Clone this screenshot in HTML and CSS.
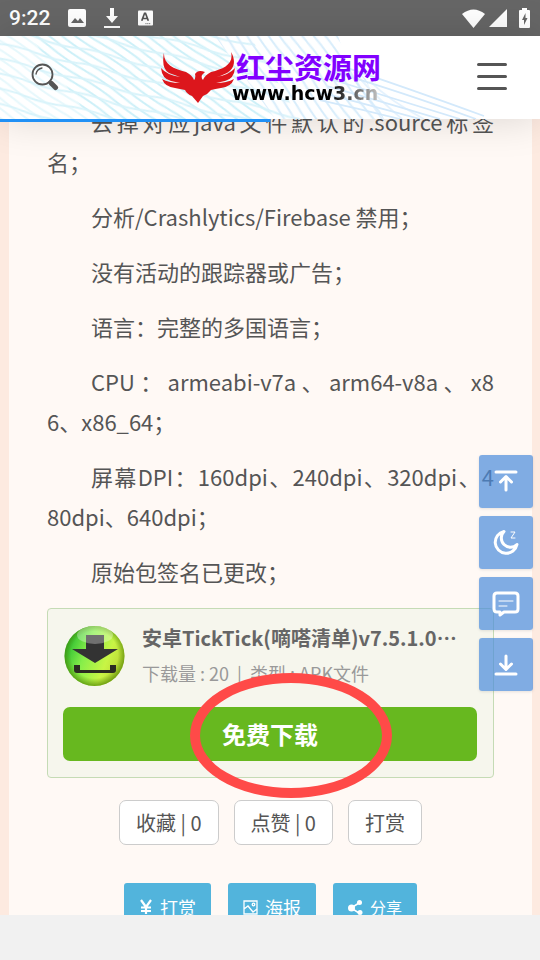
FILE: index.html
```html
<!DOCTYPE html>
<html lang="zh-CN">
<head>
    <meta charset="UTF-8">
    <meta name="viewport" content="width=device-width, initial-scale=1.0">
    <title>红尘资源网</title>
    <link rel="stylesheet" href="styles.css">
</head>
<body>

    <div class="status-bar">
        <span class="clock">9:22</span>
        <svg width="18" height="18" viewBox="0 0 18 18"><rect width="18" height="18" rx="2" fill="#fff"/><path d="M3 14l4-5 3 3 2-3 4 5z" fill="#666"/></svg>
        <svg width="16" height="20" viewBox="0 0 16 20" fill="#fff"><path d="M6 0h4v8h4l-6 7-6-7h4zM0 18h16v2H0z"/></svg>
        <svg width="15" height="16" viewBox="0 0 16 16"><rect width="16" height="16" rx="1" fill="#fff"/><path d="M4 11l3-8h1l3 8M5 8.500h5" fill="none" stroke="#555" stroke-width="1.800"/><path d="M8 14h6" stroke="#555" stroke-dasharray="1 1"/></svg>
        <div class="status-right">
            <svg width="23" height="19" viewBox="0 0 23 19" fill="#fff"><path d="M0 5Q11.500-4 23 5L11.500 19z"/></svg>
            <svg width="18" height="18" viewBox="0 0 18 18" fill="#fff"><path d="M18 0v18H0z"/></svg>
            <svg class="battery" width="11" height="20" viewBox="0 0 11 20"><path d="M3 0h5v2h2q1 0 1 1v16q0 1-1 1H1q-1 0-1-1V3q0-1 1-1h2z" fill="#fff"/><path d="M6.500 5L3 12h2v5l3.500-7H6.500z" fill="#666"/></svg>
        </div>
    </div>

    <header class="nav-bar">
        <svg class="nav-waves" viewBox="0 0 540 84" preserveAspectRatio="none" aria-hidden="true">
            <defs>
                <pattern id="wave-a" width="90" height="8" patternUnits="userSpaceOnUse" patternTransform="rotate(35)">
                    <path d="M0 4Q22 2 45 4T90 4" fill="none" stroke="#cdf0f8" stroke-width="1.800"/>
                </pattern>
                <pattern id="wave-b" width="80" height="15" patternUnits="userSpaceOnUse" patternTransform="rotate(14)">
                    <path d="M0 8Q20 5 40 8T80 8" fill="none" stroke="#d8f3fa" stroke-width="1.800"/>
                </pattern>
                <pattern id="wave-c" width="90" height="9" patternUnits="userSpaceOnUse" patternTransform="rotate(55)">
                    <path d="M0 4Q22 2 45 4T90 4" fill="none" stroke="#d8edfb" stroke-width="1.800"/>
                </pattern>
            </defs>
            <path d="M30 0H215L275 84H90z" fill="url(#wave-a)"/>
            <path d="M0 0H30L90 84H0z" fill="url(#wave-a)" opacity="0.500"/>
            <path d="M0 0H250L300 84H0z" fill="url(#wave-b)"/>
            <path d="M215 0H338Q346 26 366 44L384 84H275z" fill="url(#wave-c)"/>
            <g fill="none" stroke="#d3e9fb" stroke-width="1.800">
                <path d="M340 30Q400 50 484 81M336 37Q400 56 476 84M332 44Q390 62 460 84M328 51Q380 66 440 84M324 58Q370 70 420 84M320 65Q360 74 400 84"/>
                <path d="M344 26Q356 46 382 84M354 36Q370 56 402 84M370 46Q390 66 424 84" opacity="0.600"/>
            </g>
        </svg>
        <button class="icon-btn" aria-label="搜索">
            <svg width="28" height="28" viewBox="0 0 28 28" fill="none" stroke="#555" stroke-linecap="round"><circle cx="11.500" cy="11.500" r="10" stroke-width="1.800"/><path d="M5 11q1-5 6-6" stroke-width="1.300"/><path d="M18.500 18.500l2 2" stroke-width="2"/><path d="M20.500 20.500l4 4" stroke-width="5"/></svg>
        </button>
        <a href="#" class="nav-logo">
            <svg width="74" height="52" viewBox="0 0 74 52" fill="#dc161c"><path d="M3 0C2 12 12 17 25 20Q31 23 33 28Q35 26 34 22Q37 17 44 20L41 23Q40 26 42 28Q44 23 50 20C63 17 73 12 70 0C76 10 72 18 66 21Q60 24 55 25Q68 23 74 16Q73 27 64 29L55 31Q66 31 73 27Q70 35 60 36Q54 37 50 38Q47 42 42 44L37 51L31 44Q26 42 24 38Q19 37 14 36Q4 35 1 27Q8 31 19 31L10 29Q1 27 0 16Q6 23 19 25L8 21Q0 17 3 0z"/></svg>
            <span class="logo-text">
                <span class="logo-name">红尘资源网</span>
                <span class="logo-url">www.hcw3.cn</span>
            </span>
        </a>
        <button class="icon-btn" aria-label="菜单">
            <svg width="30" height="28" viewBox="0 0 30 28" stroke="#555" stroke-width="3" stroke-linecap="round"><path d="M1.500 1.500h27M1.500 13.500h27M1.500 25.500h27"/></svg>
        </button>
        <div class="progress"></div>
    </header>

    <main class="content">
        <article class="article">
            <p><span class="line">去掉对应java文件默认的.source标签</span><span class="line">名；</span></p>
            <p>分析/Crashlytics/Firebase 禁用；</p>
            <p>没有活动的跟踪器或广告；</p>
            <p>语言：完整的多国语言；</p>
            <p>CPU：armeabi-v7a、arm64-v8a、x86、x86_64；</p>
            <p><span class="line">屏幕DPI：160dpi、240dpi、320dpi、4</span><span class="line">80dpi、640dpi；</span></p>
            <p>原始包签名已更改；</p>

            <section class="download-card">
                <div class="download-info">
                    <svg class="download-icon" width="62" height="62" viewBox="0 0 62 62">
                        <defs>
                            <linearGradient id="orb" x1="0" y1="0.300" x2="1" y2="0.700">
                                <stop offset="0" stop-color="#22b82e"/>
                                <stop offset="0.350" stop-color="#86ee4a"/>
                                <stop offset="0.700" stop-color="#c8f545"/>
                                <stop offset="1" stop-color="#b8d030"/>
                            </linearGradient>
                            <radialGradient id="orb-edge" cx="0.500" cy="0.480" r="0.520">
                                <stop offset="0.750" stop-color="#4a8000" stop-opacity="0"/>
                                <stop offset="1" stop-color="#4a8000" stop-opacity="0.700"/>
                            </radialGradient>
                        </defs>
                        <circle cx="31.500" cy="31" r="30" fill="url(#orb)"/>
                        <circle cx="31.500" cy="31" r="30" fill="url(#orb-edge)"/>
                        <path d="M23 10h18v14h14L32 38 9 24h14z" fill="#333"/>
                        <path d="M11 40h6v5h30v-5h6v5q0 3-3 3H14q-3 0-3-3z" fill="#2b2b22"/>
                        <ellipse cx="32" cy="10" rx="18" ry="9" fill="#fff" opacity="0.300"/>
                    </svg>
                    <div class="download-text">
                        <h2>安卓TickTick(嘀嗒清单)v7.5.1.0 高级版</h2>
                        <div class="download-meta">下载量 : 20&nbsp; |&nbsp; 类型 : APK文件</div>
                    </div>
                </div>
                <button class="download-btn">免费下载</button>
                <div class="highlight-ring"></div>
            </section>

            <div class="action-row">
                <button class="action-btn">收藏 | 0</button>
                <button class="action-btn">点赞 | 0</button>
                <button class="action-btn">打赏</button>
            </div>

            <div class="share-row">
                <button class="share-btn"><svg width="14" height="16" viewBox="0 0 14 16" fill="none" stroke="#fff" stroke-width="2.200"><path d="M2 1l5 7 5-7M7 7v8M2 8.500h10M2 12h10"/></svg>打赏</button>
                <button class="share-btn"><svg width="15" height="15" viewBox="0 0 15 15" fill="none" stroke="#fff" stroke-width="1.300"><path d="M1 1h13v13H1zM1 9l4-3 5 6 4-3"/><circle cx="10.500" cy="4.500" r="1.300"/></svg>海报</button>
                <button class="share-btn share-btn-small"><svg width="15" height="15" viewBox="0 0 15 15" fill="#fff"><path d="M11 3L3 8l8 5" fill="none" stroke="#fff" stroke-width="1.500"/><circle cx="3.500" cy="8" r="3.500"/><circle cx="11.500" cy="2.500" r="2.500"/><circle cx="12" cy="12.500" r="2.500"/></svg>分享</button>
            </div>
        </article>
    </main>

    <aside class="side-tools">
        <button aria-label="返回顶部"><svg width="28" height="28" viewBox="0 0 28 28"><path d="M4 4h20M14 22V9M8.500 14L14 8.500l5.500 5.500"/></svg></button>
        <button aria-label="夜间模式"><svg width="28" height="28" viewBox="0 0 28 28"><path d="M12 2.500a11 11 0 1 0 13 13A9 9 0 0 1 12 2.500z"/><path class="thin" d="M19 3h4l-4 6h4"/></svg></button>
        <button aria-label="评论"><svg width="28" height="28" viewBox="0 0 28 28"><path d="M5 3h18q3 0 3 3v13q0 3-3 3H12l-4 3v-3H5q-3 0-3-3V6q0-3 3-3z"/><path class="thin" d="M7 11h14M7 16h8"/></svg></button>
        <button aria-label="前往底部"><svg width="28" height="28" viewBox="0 0 28 28"><path d="M4 23h20M14 5v13M8.500 13l5.500 5.500 5.500-5.500"/></svg></button>
    </aside>

    <footer class="system-nav"></footer>

</body>
</html>
```
FILE: styles.css
```css
* {
    margin: 0;
    padding: 0;
    box-sizing: border-box;
}

body {
    font-family: "Noto Sans CJK SC", sans-serif;
    color: #555;
    background: #fdeae0;
    height: 100vh;
    display: flex;
    flex-direction: column;
    position: relative;
    overflow: hidden;
}

button {
    font-family: inherit;
    border: none;
    cursor: pointer;
}

.status-bar {
    flex: none;
    height: 36px;
    padding: 0 10px 0 9px;
    display: flex;
    align-items: center;
    gap: 18px;
    background: #666;
    color: white;
}

.clock {
    font-family: Roboto, sans-serif;
    font-size: 21px;
    font-weight: 500;
}

.status-right {
    margin-left: auto;
    display: flex;
    align-items: center;
    gap: 4px;
}

.battery {
    margin-left: 8px;
}

.nav-bar {
    flex: none;
    height: 83px;
    padding: 0 33px 2px 31px;
    display: flex;
    justify-content: space-between;
    align-items: center;
    position: relative;
    z-index: 10;
    background: white;
    box-shadow: 0 0 40px rgba(0, 0, 0, 0.15);
}

.nav-waves {
    position: absolute;
    inset: 0;
    width: 100%;
    height: 100%;
}

.icon-btn {
    position: relative;
    background: none;
    display: flex;
}

.nav-logo {
    position: relative;
    display: flex;
    align-items: center;
    padding: 2px 0 0 6px;
    text-decoration: none;
}

.logo-text {
    display: flex;
    flex-direction: column;
    margin-left: -3px;
}

.logo-name {
    padding-left: 4px;
    color: #8200ff;
    font-size: 29px;
    line-height: 30px;
    font-weight: bold;
}

.logo-url {
    font-family: "DejaVu Sans", sans-serif;
    font-size: 19px;
    line-height: 24px;
    font-weight: bold;
    color: transparent;
    background: linear-gradient(90deg, #000 65%, #ccc 100%);
    -webkit-background-clip: text;
    background-clip: text;
}

.progress {
    position: absolute;
    left: 0;
    bottom: -3px;
    width: 50%;
    height: 3px;
    background: #2090f5;
}

.content {
    flex: 1;
    min-height: 0;
    padding: 0 8px 0 9px;
    overflow: hidden;
}

/* scrolled so the first line sits under the header */
.article {
    margin-top: -18px;
    padding: 0 38px;
    background: #fff9f5;
}

.article p {
    margin-bottom: 15px;
    font-size: 22px;
    line-height: 40px;
    text-indent: 2em;
    text-align: justify;
    word-break: break-all;
}

.line {
    display: block;
    text-align-last: justify;
}

.line + .line {
    text-indent: 0;
    text-align-last: start;
}

.download-card {
    position: relative;
    margin-top: 17px;
    padding: 16px 16px 16px 15px;
    border: 1px solid #c5dbb5;
    border-radius: 4px;
    background: #f6f6ed;
}

.download-info {
    display: flex;
    gap: 17px;
    margin-bottom: 20px;
}

.download-icon {
    flex: none;
}

.download-text {
    min-width: 0;
    padding-right: 16px;
}

.download-text h2 {
    font-size: 20px;
    font-weight: bold;
    line-height: 26px;
    color: #666;
    overflow: hidden;
    white-space: nowrap;
    text-overflow: ellipsis;
}

.download-meta {
    margin-top: 8px;
    font-size: 18px;
    line-height: 28px;
    color: #999;
}

.download-btn {
    display: block;
    width: 100%;
    height: 54px;
    padding-bottom: 2px;
    border-radius: 7px;
    background: #67b81f;
    color: white;
    font-size: 24px;
    font-weight: bold;
}

.highlight-ring {
    position: absolute;
    left: 142px;
    top: 64px;
    width: 202px;
    height: 125px;
    border: 10px solid #ff4a48;
    border-radius: 50%;
    pointer-events: none;
}

.action-row {
    display: flex;
    justify-content: center;
    gap: 15px;
    margin-top: 22px;
}

.action-btn {
    height: 45px;
    padding: 0 16px;
    border: 1px solid #ccc;
    border-radius: 7px;
    background: white;
    color: #555;
    font-size: 20px;
}

.share-row {
    display: flex;
    justify-content: center;
    gap: 17px;
    margin-top: 38px;
}

.share-btn {
    display: flex;
    align-items: center;
    gap: 7px;
    height: 48px;
    padding: 0 15px;
    border-radius: 3px;
    background: #52b4dc;
    color: white;
    font-size: 18px;
}

.share-btn-small {
    font-size: 16px;
}

.side-tools {
    position: absolute;
    right: 7px;
    top: 455px;
    display: flex;
    flex-direction: column;
    gap: 8px;
}

.side-tools button {
    display: flex;
    align-items: center;
    justify-content: center;
    width: 54px;
    height: 53px;
    border-radius: 3px;
    background: rgba(74, 140, 220, 0.7);
    box-shadow: 0 1px 3px rgba(0, 0, 0, 0.1);
}

.side-tools svg {
    fill: none;
    stroke: white;
    stroke-width: 3;
    stroke-linecap: round;
    stroke-linejoin: round;
}

.side-tools .thin {
    stroke-width: 1;
}

.system-nav {
    flex: none;
    height: 45px;
    background: #f1f1f1;
    position: relative;
}
```
